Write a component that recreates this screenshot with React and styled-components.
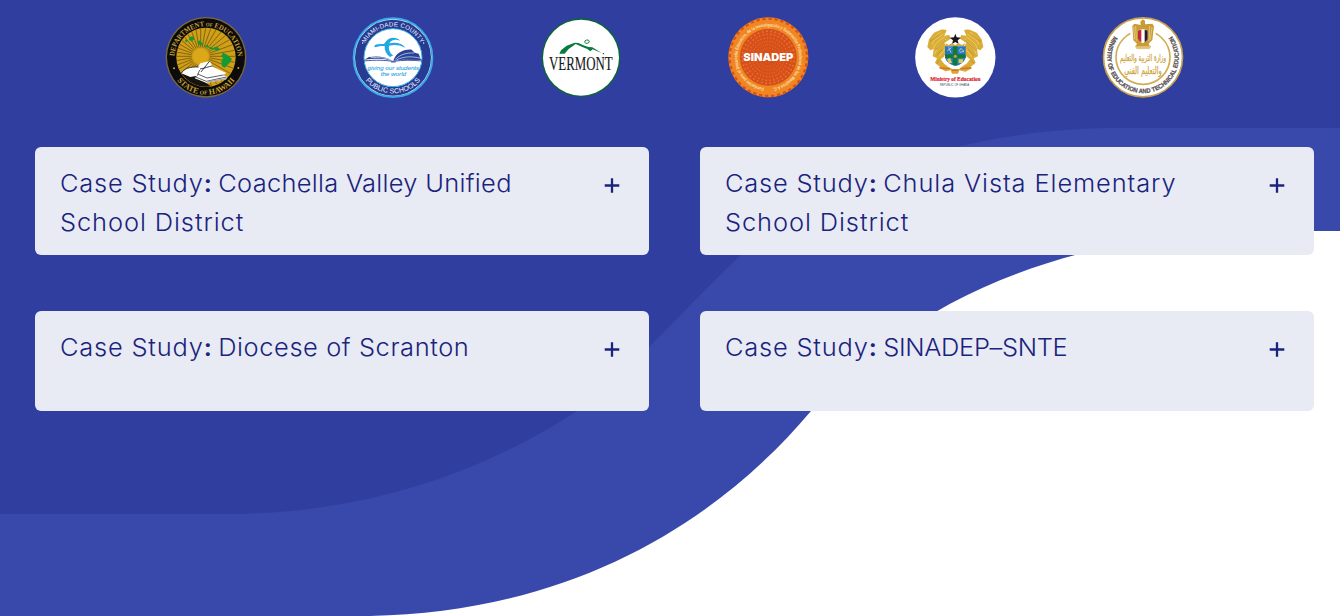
import React from "react";
import styled, { createGlobalStyle } from "styled-components";

const GlobalStyle = createGlobalStyle`
  * { box-sizing: border-box; }
  body { margin: 0; background: #fff; overflow: hidden; }
`;

const Page = styled.main`
  position: relative;
  width: 1340px;
  height: 616px;
  overflow: hidden;
  font-family: Inter, "Liberation Sans", sans-serif;
`;

const Waves = styled.svg`
  position: absolute;
  inset: 0;
  width: 1340px;
  height: 616px;
`;

const Content = styled.div`
  position: relative;
`;

const LogoRow = styled.div`
  display: grid;
  grid-template-columns: repeat(6, 187.3px);
  justify-items: center;
  padding: 17px 0 0 112.5px;
  height: 147px;
`;

const Seal = styled.svg`
  display: block;
  width: 82px;
  height: 82px;
  overflow: visible;
`;

const CardGrid = styled.div`
  display: grid;
  grid-template-columns: 614px 614px;
  column-gap: 51px;
  row-gap: 56px;
  padding-left: 35px;
`;

const Card = styled.section`
  display: flex;
  justify-content: space-between;
  align-items: flex-start;
  min-height: 100px;
  padding: 17px 28px 13px 25px;
  border-radius: 6px;
  background: #e8ebf3;
  color: #1a237e;
`;

const Title = styled.h3`
  margin: 0;
  font-size: 24px;
  line-height: 39px;
  font-weight: 300;
`;

const Line = styled.span`
  display: block;
  white-space: nowrap;
  letter-spacing: ${(p) => p.$spacing}px;
  transform: scaleX(1.06);
  transform-origin: left center;
`;

const Prefix = styled.span`
  letter-spacing: 0.75px;
`;

const Colon = styled.span`
  font-weight: 600;
  letter-spacing: 0;
`;

const Toggle = styled.svg`
  flex: none;
  width: 17px;
  height: 17px;
  margin: 13px 0 0;
`;

function Arc({ id, d, children, ...rest }) {
  return (
    <>
      <path id={id} d={d} fill="none" />
      <text textAnchor="middle" {...rest}>
        <textPath href={`#${id}`} startOffset="50%">{children}</textPath>
      </text>
    </>
  );
}

const over = (r) => `M${150 - r} 150 A${r} ${r} 0 0 1 ${150 + r} 150`;
const under = (r) => `M${150 - r} 150 A${r} ${r} 0 0 0 ${150 + r} 150`;

function Hawaii() {
  const rays = Array.from({ length: 36 }, (_, i) => (i * Math.PI) / 18);
  return (
    <Seal viewBox="27 27 246 246">
      <clipPath id="hi"><circle cx="150" cy="148" r="88" /></clipPath>
      <circle cx="150" cy="148" r="121" fill="#7c6a3c" />
      <circle cx="150" cy="148" r="117" fill="#0c0b0c" />
      <circle cx="150" cy="148" r="89" fill="#cf9f17" />
      <g clipPath="url(#hi)">
        {rays.map((a) => (
          <path key={a} stroke="#6b5010" strokeWidth="2.2"
            d={`M${134 + 27 * Math.cos(a)} ${145 + 27 * Math.sin(a)}L${134 + 125 * Math.cos(a)} ${145 + 125 * Math.sin(a)}`} />
        ))}
        <path d="M65 192 L120 205 165 235 140 245 80 230Z" fill="#17140e" />
      </g>
      <circle cx="134" cy="145" r="23" fill="#dca817" />
      <g fill="#109b35">
        <path d="M100 88l10-3 5 7-7 8-9-4z M87 96l6-1 1 6-5 2z M124 98l8 0 10 11-8 4-9-7z M145 112l11 0 3 6-10-1z M158 116l14 3 4 6-14-2z M174 117l9-1 9 7-9 7-7-5z" />
        <path d="M201 134l12 6 15 13-7 11-15 15-8-4-2-15 5-9-5-8z" />
      </g>
      <path d="M76 196C84 181 103 176 125 177L133 166 161 159 166 168 170 176 211 195 201 202 212 205 211 214 152 225 116 211 124 203 103 207Z" fill="#fff" />
      <path d="M76 196C84 181 103 176 128 177M161 159 135 192M132 183C148 180 157 176 169 174" fill="none" stroke="#111" strokeWidth="2.4" />
      <path d="M119 207 151 220 211 207M131 186 124 203M125 198 153 210 202 201" fill="none" stroke="#25232a" strokeWidth="2.2" />
      <path d="m153 222 58-10" stroke="#a6a3a2" strokeWidth="4" />
      <circle cx="54" cy="181" r="3" fill="#d4a82a" /><circle cx="247" cy="180" r="3" fill="#d4a82a" />
      <Arc id="hit" d={over(95)} fontFamily="Liberation Serif" fontWeight="700" fontSize="22" textLength="288" lengthAdjust="spacingAndGlyphs" fill="#c9a232">
        DEPARTMENT <tspan fontSize="16">OF</tspan> EDUCATION
      </Arc>
      <Arc id="hib" d={under(110)} fontFamily="Liberation Serif" fontWeight="700" fontSize="24" textLength="200" lengthAdjust="spacingAndGlyphs" fill="#c9a232">
        STATE <tspan fontSize="17">OF</tspan> HAWAII
      </Arc>
    </Seal>
  );
}

function Miami() {
  return (
    <Seal viewBox="25 27 246 246">
      <circle cx="148" cy="149" r="118" fill="#fff" />
      <circle cx="148" cy="149" r="118" fill="none" stroke="#38ace9" strokeWidth="6" />
      <circle cx="148" cy="149" r="100.500" fill="none" stroke="#263b91" strokeWidth="27" />
      <circle cx="148" cy="149" r="87" fill="#fff" stroke="#35a9e7" strokeWidth="3" />
      <path d="M92 116C92 108 105 108 121 108L125 103C136 86 158 86 169 98 153 92 142 97 137 106 158 102 176 106 185 119 164 109 151 110 136 113 134 128 141 137 149 142L139 147C128 139 122 128 123 114 111 113 101 115 97 118Z" fill="#20a9e4" />
      <path d="M149 158C156 136 178 123 204 125L213 134 225 137 231 153 234 156 178 155Z M145 158C126 145 100 143 76 147L62 155C98 150 123 151 145 158Z" fill="#294197" />
      <path d="M155 154C170 139 190 134 211 135M158 156C180 145 205 144 231 151M80 149C105 147 129 150 145 157" stroke="#d9effd" strokeWidth="2" fill="none" />
      <path d="M60 159C98 155 125 157 148 160 179 156 206 156 236 159M142 162h14" stroke="#294197" strokeWidth="2.6" fill="none" />
      <g fontFamily="Liberation Sans" fontStyle="italic" fontSize="18" fill="#2ca7df" stroke="#2ca7df" strokeWidth=".3" textAnchor="middle">
        <text x="149" y="186" textLength="155" lengthAdjust="spacingAndGlyphs">giving our students</text>
        <text x="149" y="203" textLength="76" lengthAdjust="spacingAndGlyphs">the world</text>
      </g>
      <circle cx="57" cy="105" r="2" fill="#fff" /><circle cx="240" cy="105" r="2" fill="#fff" />
      <Arc id="mit" d="M54 149 A94 94 0 0 1 242 149" fontFamily="Liberation Sans" fontSize="18.5" textLength="205" fill="#edf6ff">MIAMI-DADE COUNTY</Arc>
      <Arc id="mib" d="M41 149 A107 107 0 0 0 255 149" fontFamily="Liberation Sans" fontSize="21" textLength="188" fill="#edf6ff">PUBLIC SCHOOLS</Arc>
    </Seal>
  );
}

function Vermont() {
  return (
    <Seal viewBox="27 27 246 246">
      <circle cx="150" cy="149" r="118" fill="#096634" />
      <circle cx="150" cy="149" r="114" fill="#fff" />
      <path d="M85 137 90 127 107 113 131 104 142 105 161 113 173 117 184 118 212 135 185 124 178 130 169 123 154 117 134 108 113 123 101 137Z" fill="#087a40" />
      <ellipse cx="168" cy="101" rx="7" ry="5" fill="none" stroke="#087a40" strokeWidth="2.6" transform="rotate(-12 168 101)" />
      <circle cx="217" cy="137" r="1.8" fill="#111" />
      <text x="149.500" y="185" fontFamily="Liberation Serif" fontSize="54" textAnchor="middle" textLength="191" lengthAdjust="spacingAndGlyphs" fill="#171717" stroke="#171717" strokeWidth=".4">VERMONT</text>
    </Seal>
  );
}

function Sinadep() {
  const rings = [28, 38, 48, 58, 69, 78];
  return (
    <Seal viewBox="27 27 246 246">
      <circle cx="151" cy="148" r="120" fill="#ef8622" />
      <circle cx="151" cy="148" r="116" fill="none" stroke="#d8511b" strokeWidth="7" strokeDasharray="10 8.2" />
      <circle cx="151" cy="148" r="84" fill="#d55119" stroke="#ca4b16" strokeWidth="2" />
      {rings.map((r) => (
        <circle key={r} cx="151" cy="148" r={r} fill="none" stroke="#ee6c36" strokeWidth={r / 13} strokeDasharray={`0 ${(Math.PI * 2 * r) / 38}`} strokeLinecap="round" />
      ))}
      <text x="151" y="159" fontFamily="Inter" fontWeight="900" fontSize="33" textAnchor="middle" textLength="150" lengthAdjust="spacingAndGlyphs" fill="#fff">SINADEP</text>
      <Arc id="sin" d="M143 240 A92.500 92.500 0 1 1 159 240" fontFamily="Liberation Sans" fontWeight="700" fontSize="14" textLength="555" lengthAdjust="spacingAndGlyphs" fill="#fde0b8">Fundación para el Desarrollo Educativo, de la Investigación y Superación Profesional de los Maestros A.C.</Arc>
    </Seal>
  );
}

function Eagle() {
  return (
    <g>
      <path d="M126 66C111 60 100 70 88 74L73 94 68 117 77 127 87 123 84 145 97 151 91 164 111 181 119 168 108 154 118 146 130 123 119 105 138 92 134 81 119 83Z" fill="#d9ad36" />
      <path d="M116 78C102 91 88 91 82 110M121 86C104 97 90 105 86 122M124 93C105 109 100 118 89 139M128 114 103 146M108 72 83 95" fill="none" stroke="#edcc69" strokeWidth="3" />
      <path d="M121 96 94 126M114 123 96 142M103 80 75 101M104 156 95 169" fill="none" stroke="#b88924" strokeWidth="2" />
    </g>
  );
}

function Ghana() {
  return (
    <Seal viewBox="28 27 246 246">
      <circle cx="152" cy="148" r="120.500" fill="#fff" />
      <Eagle />
      <g transform="translate(304 0) scale(-1 1)"><Eagle /></g>
      <path d="m152 77 4 11 13 1-10 8 3 11-10-6-10 6 3-11-10-8 13-1z" fill="#1c1515" />
      <path d="m122 105 10 6 9-5 11 5 10-5 10 5 9-6-3 10h-53z" fill="#d2a944" />
      <path d="M121 115H183V149Q176 169 152 174 127 167 121 149Z" fill="#2678c2" />
      <path d="M154 144h29Q176 168 154 172Z" fill="#2e83b6" />
      <path d="M145 115h13v24h25v11h-25v22h-13v-22h-24v-11h24z" fill="#13783c" />
      <path d="m128 128 12-9M132 118l7 16M163 130l6-9 9 9-13 3" stroke="#d9d8b8" strokeWidth="2.500" fill="none" />
      <path d="m127 154 10-4 5 15-10 1zM162 154h13v11h-13z" fill="#e8c84b" />
      <circle cx="152" cy="145" r="5" fill="#b9a53f" />
      <path d="M103 179 119 168 130 176 143 183H163L174 175 184 168 203 180 182 191 164 187 160 197H142L138 187 122 190Z" fill="#dda530" />
      <path d="m105 180 31 2m31 0 32-2M142 187h18" stroke="#d5702c" strokeWidth="4" />
      <text x="152" y="220" fontFamily="Liberation Serif" fontWeight="700" fontSize="18" textAnchor="middle" textLength="151" lengthAdjust="spacingAndGlyphs" fill="#dc1f32" stroke="#dc1f32" strokeWidth=".6">Ministry of Education</text>
      <text x="149" y="233" fontFamily="Liberation Sans" fontSize="10" textAnchor="middle" textLength="88" lengthAdjust="spacingAndGlyphs" fill="#3c4a5c">REPUBLIC OF GHANA</text>
    </Seal>
  );
}

function Egypt() {
  return (
    <Seal viewBox="29 27 246 246">
      <circle cx="152" cy="148" r="118.500" fill="#fff" stroke="#c9a34c" strokeWidth="5" />
      <circle cx="152" cy="148" r="81" fill="#fff" stroke="#d2ad55" strokeWidth="5" />
      <path d="M114 42h76v52h-76z" fill="#fff" />
      <path d="M144 41 151 34 158 38 158 49 180 47 185 55 180 96 169 107 172 114H130L134 107 123 97 120 55 126 47 145 51Z" fill="#c99b35" />
      <path d="M124 57 127 94M130 54 132 99M179 57 174 96M172 54 170 100" stroke="#f0db9c" strokeWidth="2" />
      <path d="M137 68Q152 60 166 68V93Q161 101 152 106 142 102 137 93Z" fill="#fff" />
      <path d="M137 68Q142 65 147 65V103Q141 100 137 93Z" fill="#bd2b35" />
      <path d="M157 65Q163 66 166 68V93Q163 99 157 103Z" fill="#271e27" />
      <path d="M129 114h47l-5 8h-38z" fill="#e1c278" stroke="#c9a34c" />
      <g fontFamily="DejaVu Sans" fill="#cfa540" stroke="#cfa540" strokeWidth=".8" textAnchor="middle" direction="rtl">
        <text x="152" y="158" fontSize="28" textLength="138" lengthAdjust="spacingAndGlyphs">وزارة التربية والتعليم</text>
        <text x="152" y="197" fontSize="31" textLength="112" lengthAdjust="spacingAndGlyphs">والتعليم الفني</text>
      </g>
      <Arc id="egy" d="M76 72 A107.500 107.500 0 1 0 228 72" fontFamily="Liberation Sans" fontWeight="700" fontSize="19" textLength="474" lengthAdjust="spacingAndGlyphs" fill="#55504f" stroke="#55504f" strokeWidth=".7">MINISTRY OF EDUCATION AND TECHNICAL EDUCATION</Arc>
    </Seal>
  );
}

const studies = [
  [["Coachella Valley Unified", 0.28], ["School District", 0.85]],
  [["Chula Vista Elementary", 0.84], ["School District", 0.85]],
  [["Diocese of Scranton", 0.55]],
  [["SINADEP–SNTE", -0.3]],
];

function CaseStudy({ lines }) {
  return (
    <Card>
      <Title>
        {lines.map(([text, spacing], i) => (
          <Line key={text} $spacing={spacing}>
            {i === 0 && <Prefix>Case Study<Colon>: </Colon></Prefix>}
            {text}
          </Line>
        ))}
      </Title>
      <Toggle viewBox="0 0 17 17">
        <path d="M8 1.200v14.600M.700 8.500h14.600" stroke="#1a237e" strokeWidth="2.300" />
      </Toggle>
    </Card>
  );
}

export default function App() {
  return (
    <Page>
      <GlobalStyle />
      <Waves viewBox="0 0 1340 616">
        <path fill="#3949ab" d="M0 0H1340V231H1225C1000 246 882 336 811 411C715 525 570 612 370 616H0Z" />
        <path fill="#303f9f" d="M0 0H1340V128H1120C960 128 830 178 741 255C690 302 635 368 577 411C480 475 360 512 240 514H0Z" />
      </Waves>
      <Content>
        <LogoRow>
          <Hawaii /><Miami /><Vermont /><Sinadep /><Ghana /><Egypt />
        </LogoRow>
        <CardGrid>
          {studies.map((lines) => <CaseStudy key={lines[0][0]} lines={lines} />)}
        </CardGrid>
      </Content>
    </Page>
  );
}
